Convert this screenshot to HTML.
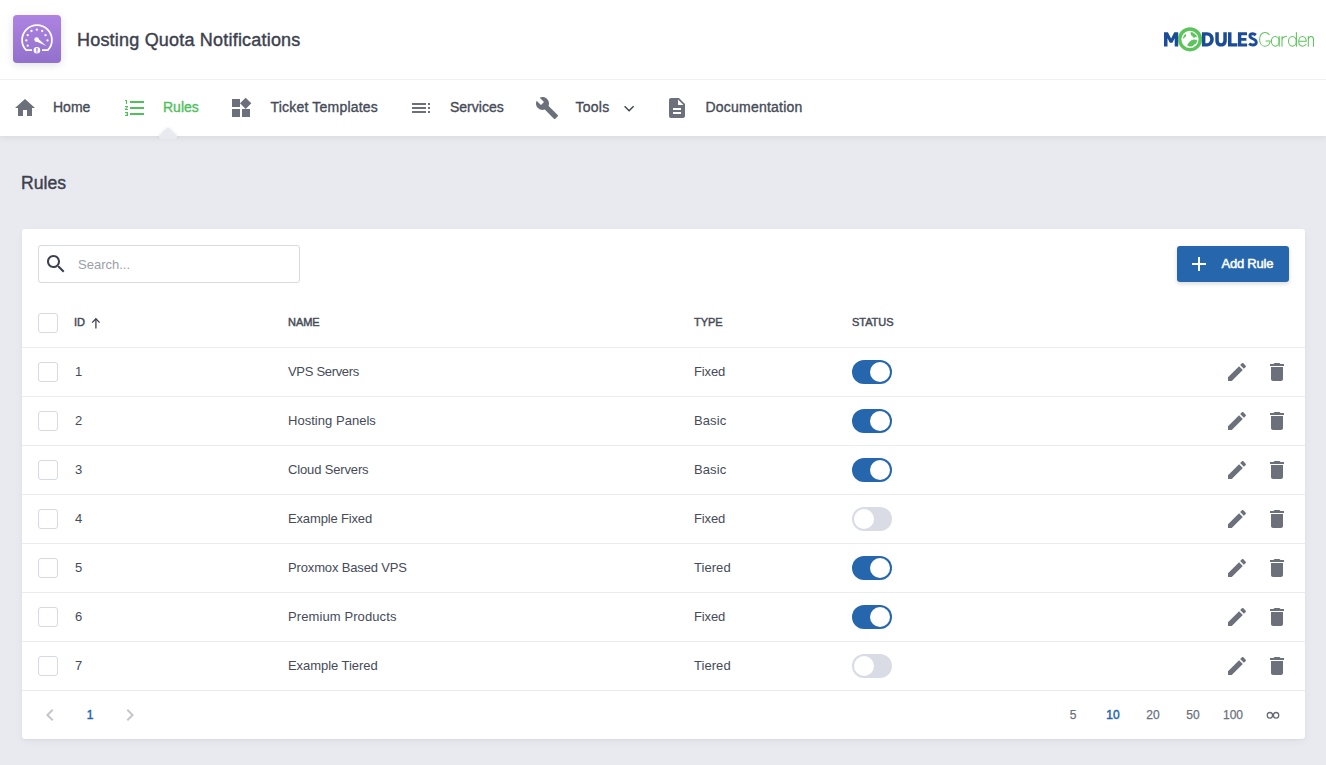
<!DOCTYPE html><html><head><meta charset="utf-8"><style>*{box-sizing:border-box;margin:0;padding:0}
html,body{width:1326px;height:765px;overflow:hidden;background:#e9eaef;font-family:"Liberation Sans",sans-serif;color:#3c414d}
#hdr{position:absolute;left:0;top:0;width:1326px;height:80px;background:#fff;border-bottom:1px solid #f0f0f0;z-index:2}
#appicon{position:absolute;left:13px;top:15px;width:48px;height:48px;border-radius:4px;background:linear-gradient(180deg,#ae83e2 0%,#9171cc 100%);box-shadow:0 2px 8px rgba(0,0,0,.12)}
#appicon svg{display:block}
#title{position:absolute;left:77px;top:30px;font-size:18px;line-height:20px;color:#3c414d;white-space:nowrap;letter-spacing:0.2px;-webkit-text-stroke:0.4px currentColor}
#logo{position:absolute;left:1160px;top:24px;width:160px;height:32px}
#logo svg{display:block}
#nav{position:absolute;left:0;top:80px;width:1326px;height:56px;background:#fff;box-shadow:0 2px 7px rgba(0,0,0,.065);z-index:1}
.ni{position:absolute;top:16px;width:24px;height:24px}
.nt{position:absolute;top:19px;font-size:14px;line-height:16px;color:#464b57;white-space:nowrap;-webkit-text-stroke:0.35px currentColor}
.nt.act{color:#4fc05a}
#notchw{z-index:3;position:absolute;left:148px;top:115px;width:40px;height:24px;overflow:hidden}#notch{position:absolute;left:13px;top:15px;width:14px;height:14px;background:#e9eaef;transform:rotate(45deg);border-radius:2px;box-shadow:0 0 4px rgba(0,0,0,.1)}
#ptitle{position:absolute;left:21px;top:172.5px;font-size:17.6px;line-height:20px;color:#3c414d;-webkit-text-stroke:0.4px currentColor}
#card{position:absolute;left:22px;top:229px;width:1283px;height:510px;background:#fff;border-radius:3px;box-shadow:0 1px 2px rgba(0,0,0,.04),0 3px 10px rgba(0,0,0,.04)}
#search{position:absolute;left:16px;top:16px;width:262px;height:38px;border:1px solid #d8dae3;border-radius:3px}
#search .sic{position:absolute;left:5px;top:6px}
#search .ph{position:absolute;left:39px;top:12px;font-size:13px;line-height:14px;color:#9b9ea7;white-space:nowrap}
#addbtn{position:absolute;left:1155px;top:17px;width:112px;height:36px;background:#2566ad;border-radius:3px;box-shadow:0 2px 4px rgba(0,0,0,.15)}
#addbtn .aic{position:absolute;left:10px;top:6px}
#addbtn .t{position:absolute;left:44.5px;top:11px;font-size:13px;line-height:14px;font-weight:normal;color:#fff;white-space:nowrap;letter-spacing:-0.22px;-webkit-text-stroke:0.5px #fff}
.row{position:absolute;left:0;width:1283px;height:49px;border-top:1px solid #ebecf0}
.cb{position:absolute;left:16px;width:20px;height:20px;border:1px solid #d8dae3;border-radius:3px;background:#fff}
.th{position:absolute;font-size:11px;letter-spacing:-0.05px;line-height:12px;font-weight:normal;-webkit-text-stroke:0.45px currentColor;color:#464b57;white-space:nowrap}
.upi{position:absolute;left:69px;top:88px}
.td{position:absolute;top:17px;font-size:13px;line-height:14px;color:#464b57;white-space:nowrap;letter-spacing:-0.15px}
.tg{position:absolute;left:830px;top:12px;width:40px;height:24px;border-radius:12px}
.tg.on{background:#2566ad}
.tg.off{background:#d9dce5}
.tg i{position:absolute;top:2px;width:20px;height:20px;border-radius:10px;background:#fff}
.tg.on i{left:18px}
.tg.off i{left:2px}
.ic{position:absolute;top:12px;width:24px;height:24px}
.pgi{position:absolute;top:12px;width:24px;height:24px}
.pg{position:absolute;top:17px;width:40px;text-align:center;font-size:12px;line-height:14px;color:#6c707b;-webkit-text-stroke:0.25px currentColor}
.pg.act{color:#2566ad;-webkit-text-stroke:0.45px currentColor}
</style></head><body>
<div id="hdr">
<div id="appicon"><svg width="48" height="48" viewBox="0 0 48 48"><path d="M19 35.2 L13.14 35.2 A14.9 14.9 0 1 1 34.86 35.2 L29 35.2" fill="none" stroke="#fff" stroke-width="1.75"/><circle cx="23.8" cy="14.7" r="1.15" fill="#fff"/><circle cx="18.5" cy="16" r="1.15" fill="#fff"/><circle cx="29.2" cy="16" r="1.15" fill="#fff"/><circle cx="14.7" cy="20.2" r="1.15" fill="#fff"/><circle cx="32.5" cy="20.2" r="1.15" fill="#fff"/><circle cx="13.3" cy="25.4" r="1.15" fill="#fff"/><circle cx="34.5" cy="25.4" r="1.15" fill="#fff"/><circle cx="14.7" cy="30.7" r="1.15" fill="#fff"/><circle cx="23.6" cy="24.6" r="2.3" fill="#fff"/><path d="M22.4 25.9 L33.3 31 L24.7 23.3 Z" fill="#fff"/><circle cx="23.9" cy="35.2" r="3.3" fill="#fff"/><rect x="23.2" y="32.9" width="1.4" height="3.2" rx=".5" fill="#9e7ad6"/><rect x="23.2" y="36.5" width="1.4" height="1.1" fill="#9e7ad6"/></svg></div>
<div id="title">Hosting Quota Notifications</div>
<div id="logo"><svg width="160" height="32" viewBox="0 0 160 32">
<g fill="#1b4c97">
<path d="M4 22.4 V8.3 H7.9 L11.1 14.4 L14.3 8.3 H18.2 V22.4 H14.7 V14.3 L12.4 18.7 H9.8 L7.5 14.3 V22.4 Z"/>
<path fill-rule="evenodd" d="M41.9 8.3 H47 C51 8.3 53.8 11.3 53.8 15.35 C53.8 19.4 51 22.4 47 22.4 H41.9 Z M45.4 11.4 V19.3 H46.8 C48.9 19.3 50.2 17.7 50.2 15.35 C50.2 13 48.9 11.4 46.8 11.4 Z"/>
<path d="M55.3 8.3 H58.8 V16.3 C58.8 18.3 59.7 19.3 61.05 19.3 C62.4 19.3 63.3 18.3 63.3 16.3 V8.3 H66.8 V16.4 C66.8 20.3 64.6 22.5 61.05 22.5 C57.5 22.5 55.3 20.3 55.3 16.4 Z"/>
<path d="M68 8.3 H71.5 V19.3 H77.3 V22.4 H68 Z"/>
<path d="M77.9 8.3 H87 V11.2 H81.3 V13.9 H86.4 V16.7 H81.3 V19.5 H87.1 V22.4 H77.9 Z"/>
</g>
<path d="M95.8 11.1 C94.9 10.2 93.8 9.8 92.7 9.8 C91 9.8 89.9 10.7 89.9 12.1 C89.9 15.3 96.3 14.2 96.3 18.3 C96.3 20 94.9 21 92.8 21 C91.4 21 90.1 20.5 89.1 19.6" fill="none" stroke="#1b4c97" stroke-width="2.9"/>
<circle cx="30" cy="15.3" r="10.35" fill="#fff" stroke="#5bc55b" stroke-width="3.5"/>
<path d="M30.4 8.6 L32.2 8.1 L33.4 9.2 L34.6 9.6 L35.6 10.8 L36.9 12 L36.5 13.4 L35.2 13 L34.2 13.8 L33 13.2 L32.2 11.8 L31.2 11.4 L30.8 10 Z" fill="#5bc55b"/>
<path d="M25.2 10.1 L26.1 10.8 L25.8 12.4 L24.6 13.4 L23.6 15 L23.1 13.6 L23.8 12 L24.4 11 Z" fill="#5bc55b"/>
<path d="M27.3 21.6 L27.8 19.8 L29 18.8 L29.6 17.4 L31 17 L31.6 15.8 L33 16.2 L33.8 15.1 L35 15.9 L36.3 15.6 L37.1 16.6 L36.7 18.5 L35.5 20 L34.2 20.4 L33.2 21.8 L31.4 22.4 L29.4 22.6 Z" fill="#5bc55b"/>
<g fill="none" stroke="#5cc45a" stroke-width="1.05" stroke-linecap="round">
<path d="M109.2 10.6 C108.1 9 106.6 8.4 104.9 8.4 C101.8 8.4 99.6 11.5 99.6 15.4 C99.6 19.3 101.8 22.2 104.9 22.2 C108 22.2 110.1 19.8 110.1 16.9 L105.9 16.9"/>
<ellipse cx="115.3" cy="17.3" rx="3.9" ry="4.9"/><path d="M119.2 12.6 V22.2"/>
<path d="M122 12.6 V22.2 M122 16.6 C122 14 123.8 12.5 126.4 12.4"/>
<ellipse cx="132.4" cy="17.3" rx="3.9" ry="4.9"/><path d="M136.4 8.4 V22.2"/>
<path d="M138.9 17.3 L146.2 17.3 C146.2 14.3 144.5 12.4 142.5 12.4 C140.3 12.4 138.7 14.6 138.7 17.3 C138.7 20.2 140.4 22.2 142.6 22.2 C144 22.2 145.2 21.5 145.9 20.3"/>
<path d="M148.3 12.6 V22.2 M148.3 16.4 C148.3 13.9 149.7 12.4 151.3 12.4 C152.9 12.4 153.5 13.6 153.5 15.6 L153.5 22.2"/>
</g>
</svg>
</div>
</div>
<div id="nav">
<div class="ni" style="left:13px"><svg width="24" height="24" viewBox="0 0 24 24" style="display:block;fill:#6c707b" ><path d="M10 20v-6h4v6h5v-8h3L12 3 2 12h3v8z"/></svg></div>
<div class="nt" style="left:53px;letter-spacing:0px">Home</div>
<div class="ni" style="left:123px"><svg width="24" height="24" viewBox="0 0 24 24" style="display:block;fill:#4fc05a" ><path d="M2 17h2v.5H3v1h1v.5H2v1h3v-4H2v1zm1-9h1V4H2v1h1v3zm-1 3h1.8L2 13.1v.9h3v-1H3.2L5 10.9V10H2v1zm5-6v2h14V5H7zm0 14h14v-2H7v2zm0-6h14v-2H7v2z"/></svg></div>
<div class="nt act" style="left:163px;letter-spacing:0px">Rules</div>
<div class="ni" style="left:229px"><svg width="24" height="24" viewBox="0 0 24 24" style="display:block;fill:#6c707b" ><path d="M13 13v8h8v-8h-8zM3 21h8v-8H3v8zM3 3v8h8V3H3zm13.66-1.31L11 7.34 16.66 13l5.66-5.66-5.66-5.65z"/></svg></div>
<div class="nt" style="left:270.5px;letter-spacing:0.2px">Ticket Templates</div>
<div class="ni" style="left:409px"><svg width="24" height="24" viewBox="0 0 24 24" style="display:block;fill:#6c707b" ><path d="M3 9h14V7H3v2zm0 4h14v-2H3v2zm0 4h14v-2H3v2zm16 0h2v-2h-2v2zm0-10v2h2V7h-2zm0 6h2v-2h-2v2z"/></svg></div>
<div class="nt" style="left:450px;letter-spacing:0px">Services</div>
<div class="ni" style="left:535px"><svg width="24" height="24" viewBox="0 0 24 24" style="display:block;fill:#6c707b" ><path d="M22.7 19l-9.1-9.1c.9-2.3.4-5-1.5-6.9-2-2-5-2.4-7.4-1.3L9 6 6 9 1.6 4.7C.4 7.1.9 10.1 2.9 12.1c1.9 1.9 4.6 2.4 6.9 1.5l9.1 9.1c.4.4 1 .4 1.4 0l2.3-2.3c.5-.4.5-1.1.1-1.4z"/></svg></div>
<div class="nt" style="left:575.5px;letter-spacing:0.25px">Tools</div>
<div class="ni" style="left:665px"><svg width="24" height="24" viewBox="0 0 24 24" style="display:block;fill:#6c707b" ><path d="M14 2H6c-1.1 0-1.99.9-1.99 2L4 20c0 1.1.89 2 1.99 2H18c1.1 0 2-.9 2-2V8l-6-6zm2 16H8v-2h8v2zm0-4H8v-2h8v2zm-3-5V3.5L18.5 9H13z"/></svg></div>
<div class="nt" style="left:705.5px;letter-spacing:0.22px">Documentation</div>
<svg style="position:absolute;left:620px;top:21.7px" width="18" height="14" viewBox="0 0 18 14"><polyline points="4.6,4.3 9.1,8.7 13.6,4.2" fill="none" stroke="#3c414d" stroke-width="1.35"/></svg>
</div>
<div id="notchw"><div id="notch"></div></div>
<div id="ptitle">Rules</div>
<div id="card">
<div id="search"><div class="sic"><svg width="24" height="24" viewBox="0 0 24 24" style="display:block;fill:#3c414d" ><path d="M15.5 14h-.79l-.28-.27C15.41 12.59 16 11.11 16 9.5 16 5.91 13.09 3 9.5 3S3 5.91 3 9.5 5.91 16 9.5 16c1.610 0 3.09-.59 4.23-1.57l.27.28v.79l5 4.99L20.49 19l-4.99-5zm-6 0C7.01 14 5 11.99 5 9.5S7.01 5 9.5 5 14 7.01 14 9.5 11.99 14 9.5 14z"/></svg></div><div class="ph">Search...</div></div>
<div id="addbtn"><div class="aic"><svg width="24" height="24" viewBox="0 0 24 24" style="display:block;fill:#fff" ><path d="M19 13h-6v6h-2v-6H5v-2h6V5h2v6h6v2z"/></svg></div><div class="t">Add Rule</div></div>
<div class="cb" style="top:84px"></div>
<div class="th" style="left:52px;top:87px">ID</div>
<div class="upi"><svg width="10" height="12" viewBox="0 0 10 12" style="display:block"><path d="M4.9 2.2V11.4" stroke="#3c414d" stroke-width="1.3" fill="none"/><path d="M1.2 5.6L4.9 1.7 8.6 5.6" stroke="#3c414d" stroke-width="1.3" fill="none"/></svg></div>
<div class="th" style="left:266px;top:87px">NAME</div>
<div class="th" style="left:672px;top:87px">TYPE</div>
<div class="th" style="left:830px;top:87px">STATUS</div>
<div class="row" style="top:118px">
<div class="cb" style="top:14px"></div>
<div class="td" style="left:53px">1</div>
<div class="td" style="left:266px;letter-spacing:-0.31px">VPS Servers</div>
<div class="td" style="left:672px;letter-spacing:-0.15px">Fixed</div>
<div class="tg on"><i></i></div>
<div class="ic" style="left:1203px"><svg width="24" height="24" viewBox="0 0 24 24" style="display:block;fill:#6c707b" ><path d="M3 17.25V21h3.75L17.81 9.94l-3.75-3.75L3 17.25zM20.71 7.04c.39-.39.39-1.02 0-1.41l-2.340-2.34c-.39-.39-1.02-.39-1.41 0l-1.83 1.83 3.75 3.75 1.83-1.83z"/></svg></div>
<div class="ic" style="left:1243px"><svg width="24" height="24" viewBox="0 0 24 24" style="display:block;fill:#6c707b" ><path d="M6 19c0 1.1.9 2 2 2h8c1.1 0 2-.9 2-2V7H6v12zM19 4h-3.5l-1-1h-5l-1 1H5v2h14V4z"/></svg></div>
</div>
<div class="row" style="top:167px">
<div class="cb" style="top:14px"></div>
<div class="td" style="left:53px">2</div>
<div class="td" style="left:266px;letter-spacing:0.03px">Hosting Panels</div>
<div class="td" style="left:672px;letter-spacing:0.1px">Basic</div>
<div class="tg on"><i></i></div>
<div class="ic" style="left:1203px"><svg width="24" height="24" viewBox="0 0 24 24" style="display:block;fill:#6c707b" ><path d="M3 17.25V21h3.75L17.81 9.94l-3.75-3.75L3 17.25zM20.71 7.04c.39-.39.39-1.02 0-1.41l-2.340-2.34c-.39-.39-1.02-.39-1.41 0l-1.83 1.83 3.75 3.75 1.83-1.83z"/></svg></div>
<div class="ic" style="left:1243px"><svg width="24" height="24" viewBox="0 0 24 24" style="display:block;fill:#6c707b" ><path d="M6 19c0 1.1.9 2 2 2h8c1.1 0 2-.9 2-2V7H6v12zM19 4h-3.5l-1-1h-5l-1 1H5v2h14V4z"/></svg></div>
</div>
<div class="row" style="top:216px">
<div class="cb" style="top:14px"></div>
<div class="td" style="left:53px">3</div>
<div class="td" style="left:266px;letter-spacing:-0.15px">Cloud Servers</div>
<div class="td" style="left:672px;letter-spacing:0.1px">Basic</div>
<div class="tg on"><i></i></div>
<div class="ic" style="left:1203px"><svg width="24" height="24" viewBox="0 0 24 24" style="display:block;fill:#6c707b" ><path d="M3 17.25V21h3.75L17.81 9.94l-3.75-3.75L3 17.25zM20.71 7.04c.39-.39.39-1.02 0-1.41l-2.340-2.34c-.39-.39-1.02-.39-1.41 0l-1.83 1.83 3.75 3.75 1.83-1.83z"/></svg></div>
<div class="ic" style="left:1243px"><svg width="24" height="24" viewBox="0 0 24 24" style="display:block;fill:#6c707b" ><path d="M6 19c0 1.1.9 2 2 2h8c1.1 0 2-.9 2-2V7H6v12zM19 4h-3.5l-1-1h-5l-1 1H5v2h14V4z"/></svg></div>
</div>
<div class="row" style="top:265px">
<div class="cb" style="top:14px"></div>
<div class="td" style="left:53px">4</div>
<div class="td" style="left:266px;letter-spacing:-0.15px">Example Fixed</div>
<div class="td" style="left:672px;letter-spacing:-0.15px">Fixed</div>
<div class="tg off"><i></i></div>
<div class="ic" style="left:1203px"><svg width="24" height="24" viewBox="0 0 24 24" style="display:block;fill:#6c707b" ><path d="M3 17.25V21h3.75L17.81 9.94l-3.75-3.75L3 17.25zM20.71 7.04c.39-.39.39-1.02 0-1.41l-2.340-2.34c-.39-.39-1.02-.39-1.41 0l-1.83 1.83 3.75 3.75 1.83-1.83z"/></svg></div>
<div class="ic" style="left:1243px"><svg width="24" height="24" viewBox="0 0 24 24" style="display:block;fill:#6c707b" ><path d="M6 19c0 1.1.9 2 2 2h8c1.1 0 2-.9 2-2V7H6v12zM19 4h-3.5l-1-1h-5l-1 1H5v2h14V4z"/></svg></div>
</div>
<div class="row" style="top:314px">
<div class="cb" style="top:14px"></div>
<div class="td" style="left:53px">5</div>
<div class="td" style="left:266px;letter-spacing:-0.15px">Proxmox Based VPS</div>
<div class="td" style="left:672px;letter-spacing:0.05px">Tiered</div>
<div class="tg on"><i></i></div>
<div class="ic" style="left:1203px"><svg width="24" height="24" viewBox="0 0 24 24" style="display:block;fill:#6c707b" ><path d="M3 17.25V21h3.75L17.81 9.94l-3.75-3.75L3 17.25zM20.71 7.04c.39-.39.39-1.02 0-1.41l-2.340-2.34c-.39-.39-1.02-.39-1.41 0l-1.83 1.83 3.75 3.75 1.83-1.83z"/></svg></div>
<div class="ic" style="left:1243px"><svg width="24" height="24" viewBox="0 0 24 24" style="display:block;fill:#6c707b" ><path d="M6 19c0 1.1.9 2 2 2h8c1.1 0 2-.9 2-2V7H6v12zM19 4h-3.5l-1-1h-5l-1 1H5v2h14V4z"/></svg></div>
</div>
<div class="row" style="top:363px">
<div class="cb" style="top:14px"></div>
<div class="td" style="left:53px">6</div>
<div class="td" style="left:266px;letter-spacing:0.1px">Premium Products</div>
<div class="td" style="left:672px;letter-spacing:-0.15px">Fixed</div>
<div class="tg on"><i></i></div>
<div class="ic" style="left:1203px"><svg width="24" height="24" viewBox="0 0 24 24" style="display:block;fill:#6c707b" ><path d="M3 17.25V21h3.75L17.81 9.94l-3.75-3.75L3 17.25zM20.71 7.04c.39-.39.39-1.02 0-1.41l-2.340-2.34c-.39-.39-1.02-.39-1.41 0l-1.83 1.83 3.75 3.75 1.83-1.83z"/></svg></div>
<div class="ic" style="left:1243px"><svg width="24" height="24" viewBox="0 0 24 24" style="display:block;fill:#6c707b" ><path d="M6 19c0 1.1.9 2 2 2h8c1.1 0 2-.9 2-2V7H6v12zM19 4h-3.5l-1-1h-5l-1 1H5v2h14V4z"/></svg></div>
</div>
<div class="row" style="top:412px">
<div class="cb" style="top:14px"></div>
<div class="td" style="left:53px">7</div>
<div class="td" style="left:266px;letter-spacing:-0.05px">Example Tiered</div>
<div class="td" style="left:672px;letter-spacing:0.05px">Tiered</div>
<div class="tg off"><i></i></div>
<div class="ic" style="left:1203px"><svg width="24" height="24" viewBox="0 0 24 24" style="display:block;fill:#6c707b" ><path d="M3 17.25V21h3.75L17.81 9.94l-3.75-3.75L3 17.25zM20.71 7.04c.39-.39.39-1.02 0-1.41l-2.340-2.34c-.39-.39-1.02-.39-1.41 0l-1.83 1.83 3.75 3.75 1.83-1.83z"/></svg></div>
<div class="ic" style="left:1243px"><svg width="24" height="24" viewBox="0 0 24 24" style="display:block;fill:#6c707b" ><path d="M6 19c0 1.1.9 2 2 2h8c1.1 0 2-.9 2-2V7H6v12zM19 4h-3.5l-1-1h-5l-1 1H5v2h14V4z"/></svg></div>
</div>
<div class="row" style="top:461px">
<div class="pgi" style="left:16px"><svg width="24" height="24" viewBox="0 0 24 24" style="display:block;fill:#c4c6cc" ><path d="M15.41 7.41L14 6l-6 6 6 6 1.41-1.41L10.83 12z"/></svg></div>
<div class="pg act" style="left:48px">1</div>
<div class="pgi" style="left:96px"><svg width="24" height="24" viewBox="0 0 24 24" style="display:block;fill:#c4c6cc" ><path d="M10 6L8.59 7.41 13.17 12l-4.58 4.59L10 18l6-6z"/></svg></div>
<div class="pg" style="left:1031px">5</div>
<div class="pg act" style="left:1071px">10</div>
<div class="pg" style="left:1111px">20</div>
<div class="pg" style="left:1151px">50</div>
<div class="pg" style="left:1191px">100</div>
<svg style="position:absolute;left:1243px;top:18px" width="16" height="12" viewBox="0 0 16 12"><ellipse cx="4.9" cy="6.35" rx="2.65" ry="2.85" fill="none" stroke="#666a75" stroke-width="1.3"/><ellipse cx="11.1" cy="6.35" rx="2.65" ry="2.85" fill="none" stroke="#666a75" stroke-width="1.3"/></svg>
</div>
</div>
</body></html>
